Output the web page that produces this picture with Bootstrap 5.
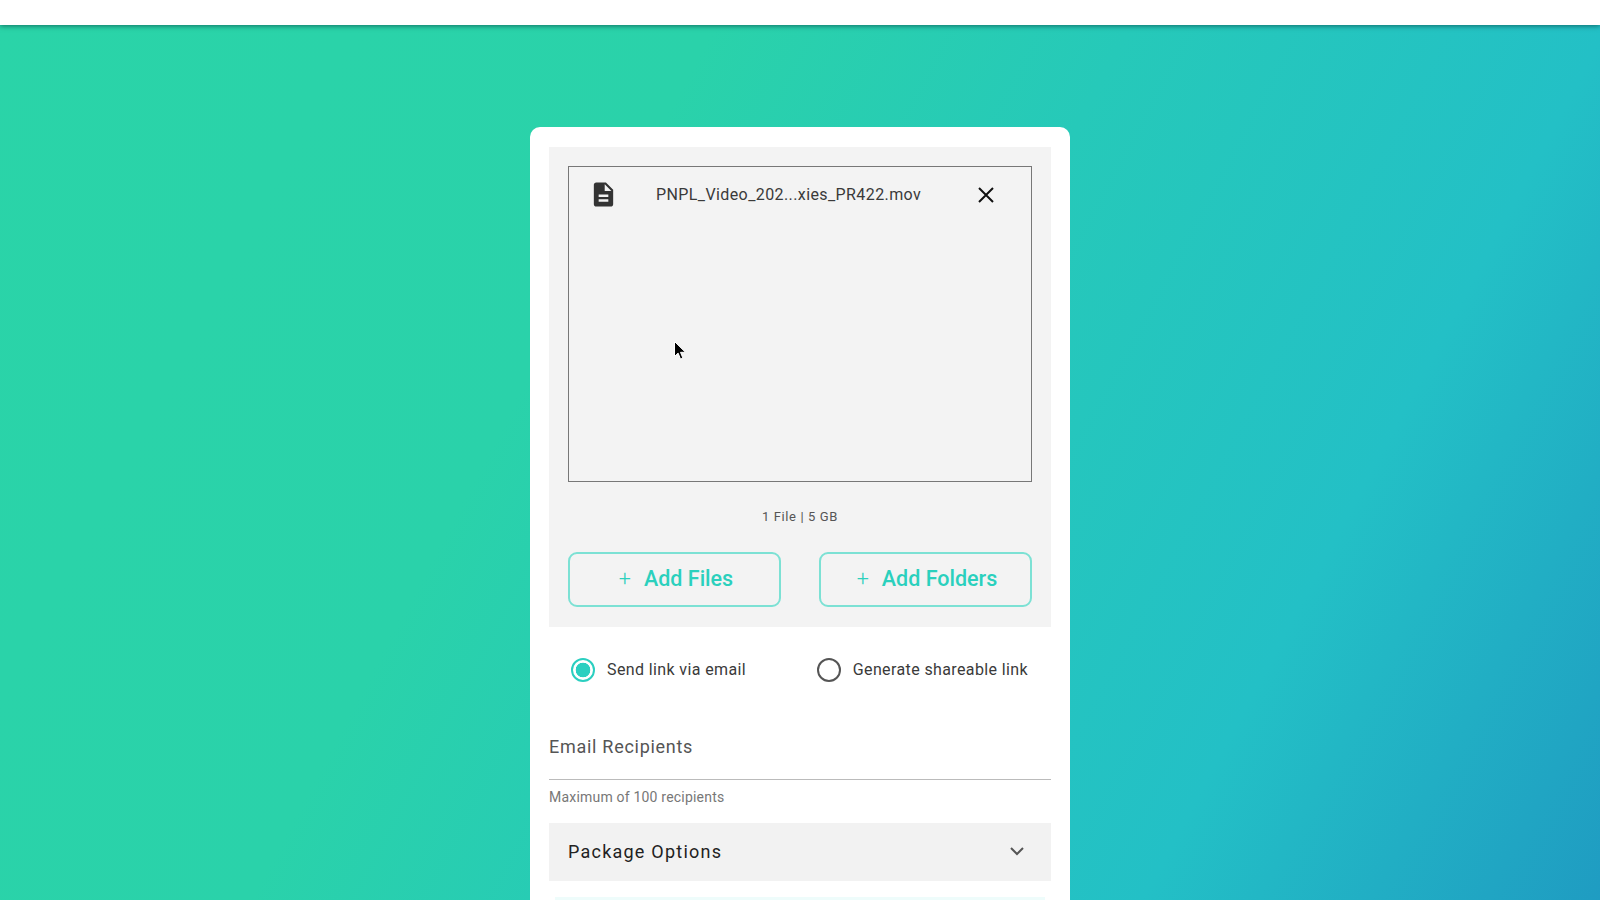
<!DOCTYPE html>
<html lang="en">

<head>
    <meta charset="UTF-8">
    <meta name="viewport" content="width=device-width, initial-scale=1">
    <title>Send Files</title>
    <link href="https://cdn.jsdelivr.net/npm/bootstrap@5.3.3/dist/css/bootstrap.min.css" rel="stylesheet">
    <style>
        html, body { height: 900px; overflow: hidden; }
        body {
            font-family: Roboto, "Liberation Sans", sans-serif;
            background: linear-gradient(118deg, #2ad4a8 0%, #2ad2aa 35%, #26c9b9 55%, #23c0c6 78%, #1f9cc2 100%);
        }
        .top-strip { height: 25px; background: #fff; box-shadow: 0 1px 5px rgba(0, 60, 60, .65); }
        .send-card { width: 540px; margin-top: 102px; border: 0; border-radius: 10px; padding: 20px 19px 0; }
        .drop-panel { background: #f3f3f3; padding: 19px; height: 480px; }
        .file-box { height: 316px; border: 1px solid #777; padding: 13px 17px 0 20px; }
        .file-name { font-size: 16px; letter-spacing: .4px; color: #3a3a3a; margin-left: 38px; width: 300px; }
        .close-icon { margin-right: 19px; }
        .file-count { font-size: 13px; letter-spacing: .6px; color: #555; margin: 25px 0 25px; line-height: 20px; }
        .add-btn {
            width: 213px; height: 55px; padding: 0 0 0 3px; font-size: 21.5px; font-weight: 500; color: #2bd0bd; background: transparent;
            border: 2px solid #7ce1d4; border-radius: 9px; display: flex; align-items: center; justify-content: center; gap: 13px;
        }
        .add-btn:hover { color: #2bd0bd; border-color: #7ce1d4; }
        .radio-row { padding: 31px 23px 0 22px; height: 85px; }
        .radio-item { font-size: 16px; letter-spacing: .38px; color: #3a3a3a; margin: 0; gap: 12px; }
        .radio-item .form-check-input { width: 24px; height: 24px; margin: 0; border: 2px solid #555; float: none; }
        .radio-item .form-check-input:checked {
            background-color: #fff; border-color: #2bcfc0;
            background-image: radial-gradient(circle, #2bcfc0 0, #2bcfc0 7px, transparent 7.6px);
        }
        .recipients { padding-top: 22px; height: 68px; border-bottom: 1px solid #bbb; font-size: 18px; letter-spacing: .72px; color: #555; line-height: 26px; }
        .hint { font-size: 14px; letter-spacing: .2px; color: #777; margin-top: 7px; line-height: 20px; }
        .options-bar { height: 58px; margin-top: 16px; padding: 0 26px 2px 19px; background: #f2f2f2; font-size: 18px; letter-spacing: 1.23px; color: #222; }
        .next-strip { height: 30px; margin: 16px 6px 0; background: #eefcfb; }
        .mouse-arrow { position: absolute; left: 673px; top: 340px; }
    </style>
</head>

<body>
    <div class="top-strip"></div>

    <main class="d-flex justify-content-center">
        <div class="card send-card">
            <div class="drop-panel">
                <div class="file-box">
                    <div class="d-flex align-items-center">
                        <svg width="29" height="29" viewBox="0 0 24 24" fill="#333" class="flex-shrink-0">
                            <path d="M14 2H6c-1.1 0-2 .9-2 2v16c0 1.1.9 2 2 2h12c1.1 0 2-.9 2-2V8l-6-6zm2 16H8v-2h8v2zm0-4H8v-2h8v2zm-3-5V3.5L18.5 9H13z"/>
                        </svg>
                        <div class="file-name text-nowrap">PNPL_Video_202...xies_PR422.mov</div>
                        <svg width="18" height="18" viewBox="0 0 18 18" class="ms-auto close-icon flex-shrink-0" stroke="#111" stroke-width="2" fill="none">
                            <path d="M2 2l14 14M16 2L2 16"/>
                        </svg>
                    </div>
                </div>
                <div class="file-count text-center">1 File | 5 GB</div>
                <div class="d-flex justify-content-between">
                    <button type="button" class="btn add-btn"><span class="fw-light">+</span>Add Files</button>
                    <button type="button" class="btn add-btn"><span class="fw-light">+</span>Add Folders</button>
                </div>
            </div>

            <div class="radio-row d-flex justify-content-between">
                <label class="radio-item d-flex align-items-start">
                    <input class="form-check-input" type="radio" name="sendMode" checked>
                    <span>Send link via email</span>
                </label>
                <label class="radio-item d-flex align-items-start">
                    <input class="form-check-input" type="radio" name="sendMode">
                    <span>Generate shareable link</span>
                </label>
            </div>

            <div class="recipients">Email Recipients</div>
            <div class="hint">Maximum of 100 recipients</div>

            <div class="options-bar d-flex align-items-center justify-content-between">
                <span>Package Options</span>
                <svg width="16" height="10" viewBox="0 0 16 10" fill="none" stroke="#555" stroke-width="2"><path d="M2 2l6 6 6-6"/></svg>
            </div>
            <div class="next-strip"></div>
        </div>
    </main>

    <svg class="mouse-arrow" width="14" height="22" viewBox="0 0 14 22">
        <path d="M1.5 1.5v15l3.6-3.4 2.4 6 2.4-1-2.4-5.8h5z" fill="#000" stroke="#fff" stroke-width="1"/>
    </svg>
</body>

</html>
